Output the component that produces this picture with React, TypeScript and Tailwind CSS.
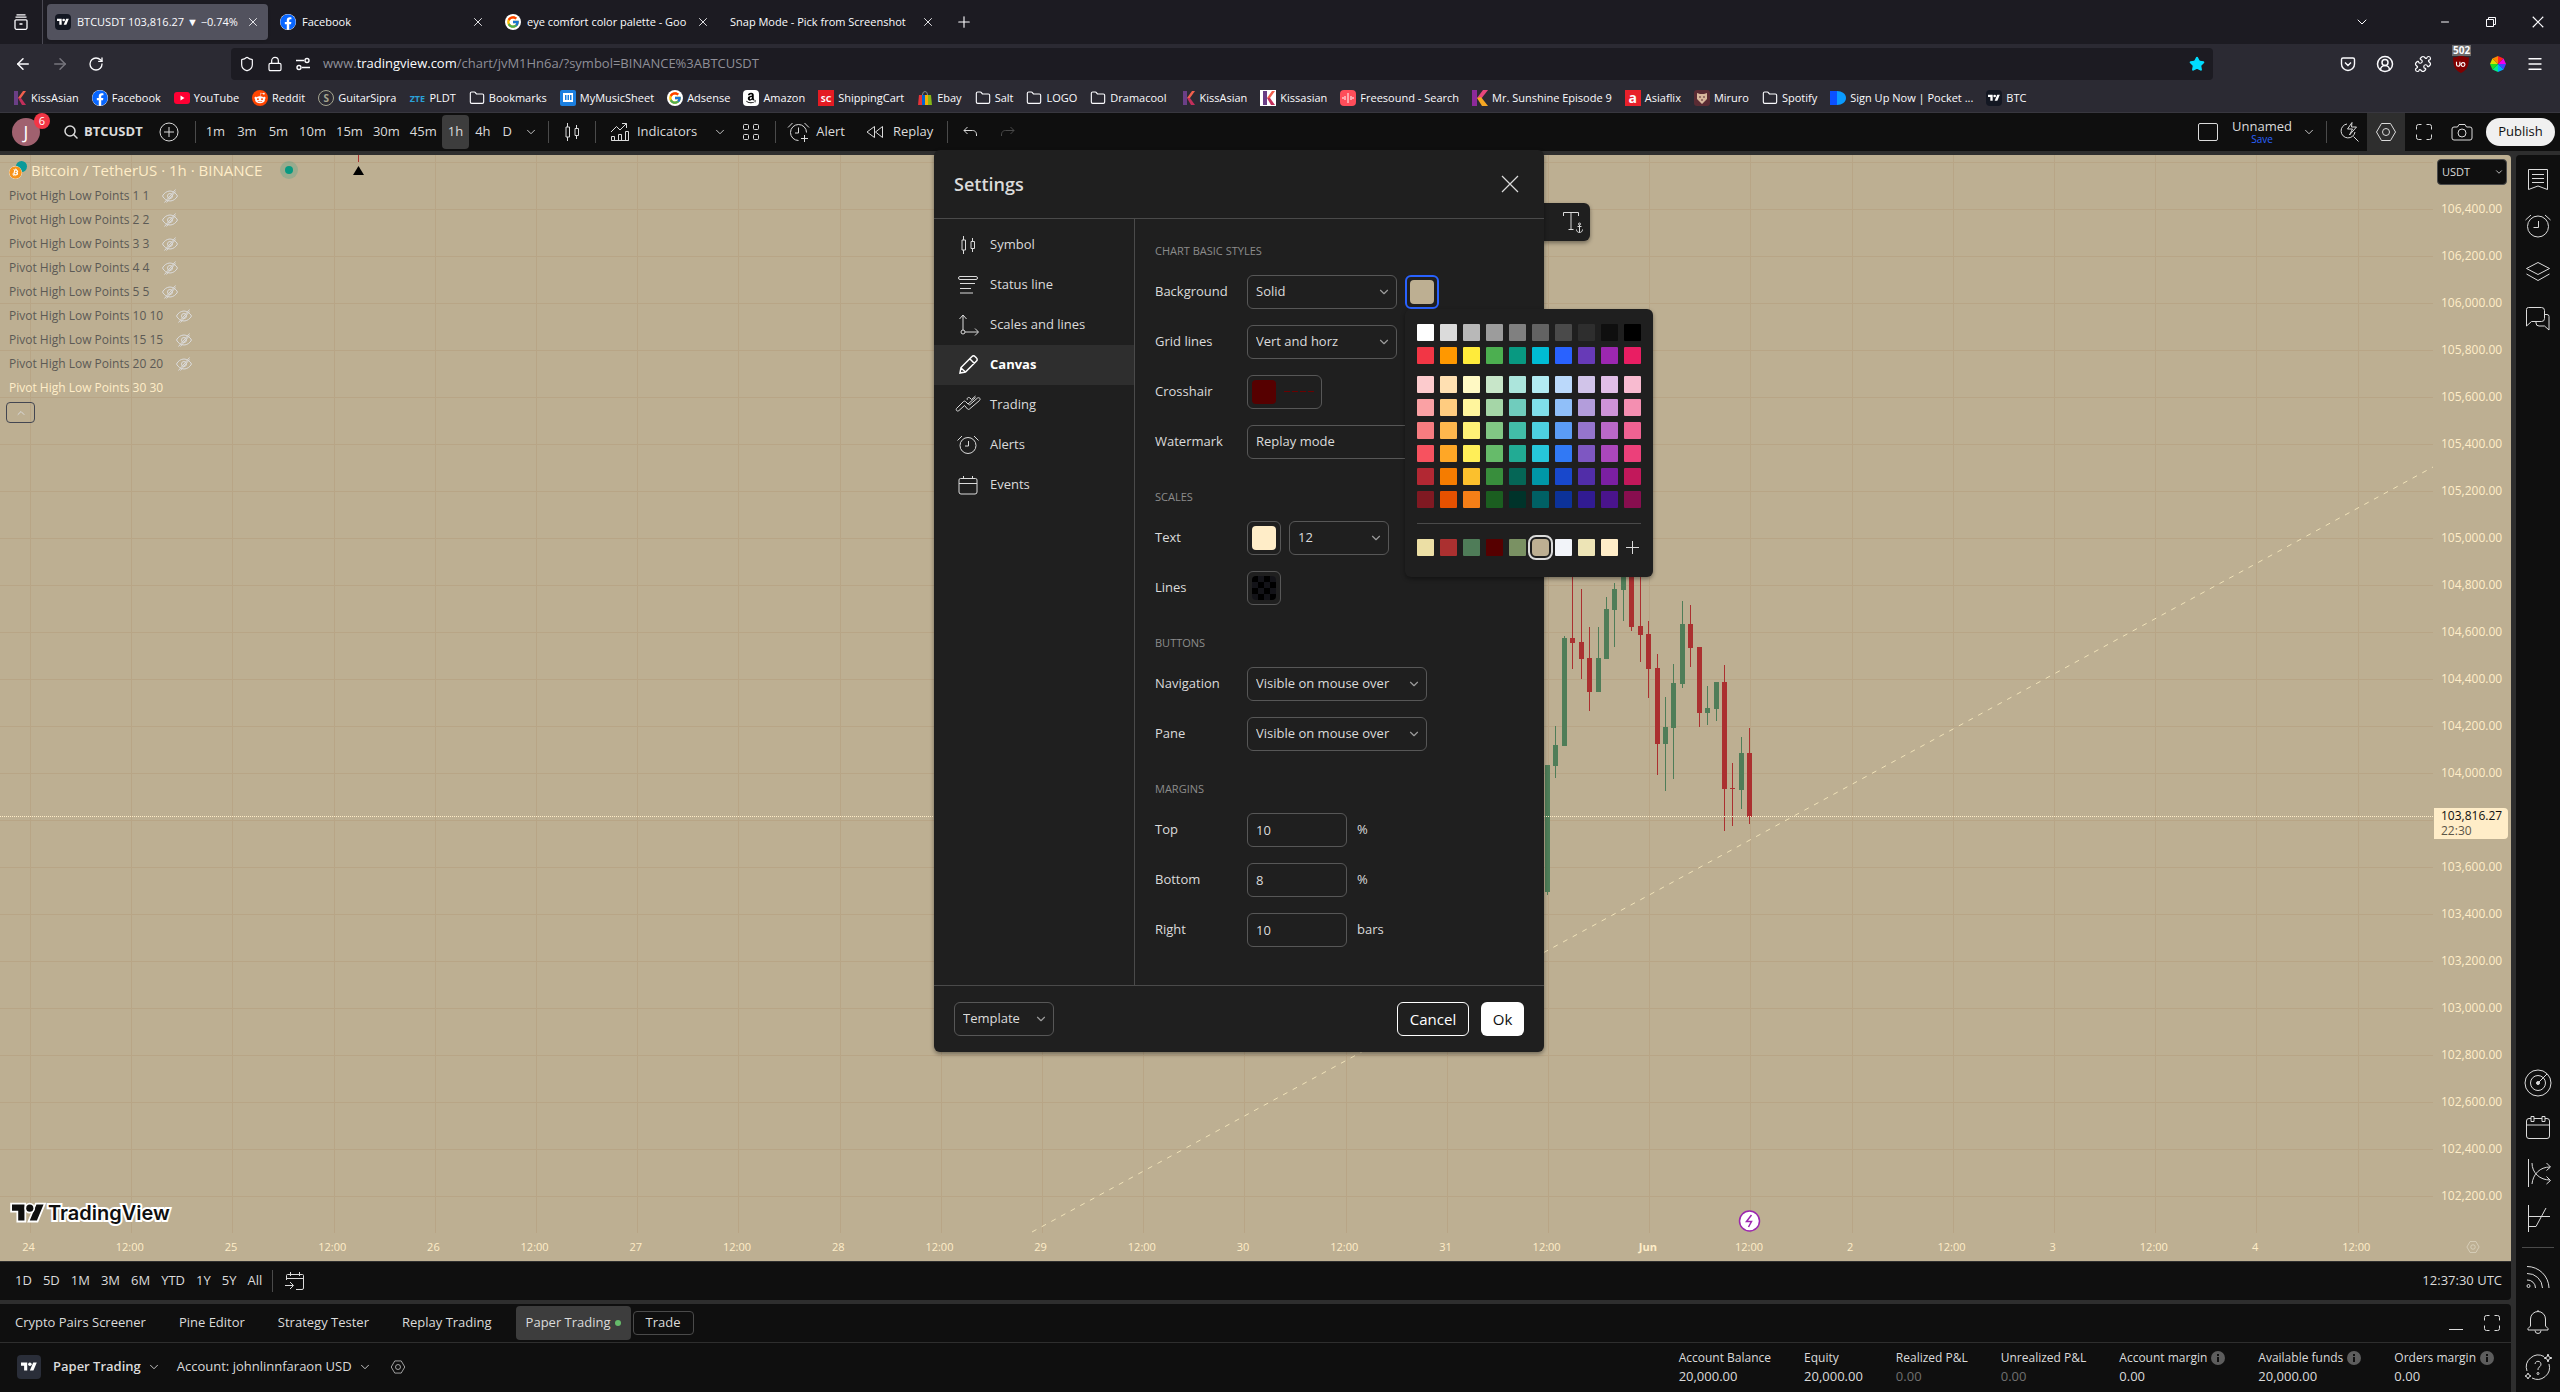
import React, { useState } from 'react';
import { ChevronDown, X, Plus, ArrowLeft, ArrowRight, RotateCw, Shield, Lock, Star, Menu, Minus, Folder, Puzzle, CircleUserRound } from 'lucide-react';
import { FaFacebook, FaRedditAlien, FaAmazon, FaBitcoin } from 'react-icons/fa';
import { FcGoogle } from 'react-icons/fc';

type IconProps = { children: React.ReactNode; className?: string };

// 28x28 line icon, the grid that all the chart icons share
const Icon = ({ children, className = 'w-7 h-7' }: IconProps) => (
  <svg viewBox="0 0 28 28" fill="none" stroke="currentColor" className={`shrink-0 ${className}`}>
    {children}
  </svg>
);

const TvMark = ({ className = '' }: { className?: string }) => (
  <svg viewBox="0 0 36 28" fill="currentColor" className={className}>
    <path d="M14 22H7V11H0V4h14v18zM28 22h-8l7.5-18h8L28 22z" />
    <circle cx="20" cy="8" r="4" />
  </svg>
);

const TvBadge = () => (
  <span className="w-4 h-4 shrink-0 rounded-sm bg-[#131722] text-white flex items-center justify-center">
    <TvMark className="w-3 h-3" />
  </span>
);

const CandlesIcon = () => (
  <Icon>
    <path d="M9.5 5v4M9.5 19v4M18.5 7v3M18.5 18v3M8 9h3.500v10H8zM17 10.500h3.500v7H17z" />
  </Icon>
);

const HexIcon = ({ className }: { className?: string }) => (
  <Icon className={className}>
    <path d="M9.500 5.500h9l5 8.500-5 8.500h-9l-5-8.500z" />
    <circle cx="14" cy="14" r="3.500" />
  </Icon>
);

const AlarmIcon = ({ plus = false }: { plus?: boolean }) => (
  <Icon>
    {plus ? (
      <path d="M14.500 22.500a8 8 0 1 1 8-8M14.500 9.500v5.500H11M4 9.500l4.500-4.500M25 9.500L20.500 5M20.500 17v7M17 20.500h7" />
    ) : (
      <path d="M22 14.500a8 8 0 1 1-16 0 8 8 0 0 1 16 0zM14.500 10v5H11M3.500 9.500L8 5M24.500 9.500L20 5" />
    )}
  </Icon>
);

const CalendarIcon = () => (
  <Icon>
    <path d="M6.500 7.500h15a1.500 1.500 0 0 1 1.500 1.500v12a2 2 0 0 1-2 2H7a2 2 0 0 1-2-2V9a1.500 1.500 0 0 1 1.500-1.500zM5 12.500h18M9.500 5v3M18.500 5v3" />
  </Icon>
);

const CornersIcon = ({ className }: { className?: string }) => (
  <Icon className={className}>
    <path d="M6.500 11.500v-3a2 2 0 0 1 2-2h3M16.500 6.500h3a2 2 0 0 1 2 2v3M21.500 16.500v3a2 2 0 0 1-2 2h-3M11.500 21.500h-3a2 2 0 0 1-2-2v-3" />
  </Icon>
);

const EyeOff = () => (
  <svg viewBox="0 0 18 18" fill="none" stroke="currentColor" className="w-[18px] h-[18px] text-[#dbdbdb]">
    <path d="M1.500 9C3 6 6 4 9 4s6 2 7.500 5c-1.500 3-4.500 5-7.500 5s-6-2-7.500-5zM3.500 15.500l11-13M5.500 15.500l9-11" />
    <circle cx="9" cy="9" r="2.500" />
  </svg>
);

const VLine = () => <div className="w-px h-[22px] bg-[#4a4a4a] shrink-0" />;

/* ---------- browser chrome ---------- */

const tabs = [
  { title: 'BTCUSDT 103,816.27 ▼ −0.74%', icon: <TvBadge />, active: true },
  { title: 'Facebook', icon: <FaFacebook className="w-4 h-4 text-[#0866ff] bg-white rounded-full" /> },
  { title: 'eye comfort color palette - Goo', icon: <span className="w-4 h-4 shrink-0 rounded-full bg-white flex items-center justify-center"><FcGoogle className="w-3.5 h-3.5" /></span> },
  { title: 'Snap Mode - Pick from Screenshot', icon: null },
];

const TabStrip = () => (
  <div className="h-11 flex items-center bg-[#1c1b22]">
    <button aria-label="Recent browsing" className="w-[42px] flex justify-center">
      <svg viewBox="0 0 16 16" fill="none" stroke="currentColor" className="w-4 h-4">
        <path strokeWidth="1.300" d="M3.500.8h9M2.500 3.200h11M3 5.800h10a1 1 0 0 1 1 1v7a1.500 1.500 0 0 1-1.500 1.500h-9A1.500 1.500 0 0 1 2 13.800v-7a1 1 0 0 1 1-1zM6.500 10h3" />
      </svg>
    </button>
    <div className="w-px h-full bg-[#4a4953] mr-1" />
    <div className="flex gap-1">
      {tabs.map((tab) => (
        <div key={tab.title} className={`w-[221px] h-9 rounded px-2 flex items-center gap-1.5 ${tab.active ? 'bg-[#52525e] shadow' : ''}`}>
          {tab.icon}
          <button className="flex-1 text-left whitespace-nowrap">{tab.title}</button>
          <button aria-label="Close tab">
            <X className="w-3.5 h-3.5" strokeWidth={1.5} />
          </button>
        </div>
      ))}
    </div>
    <button aria-label="New tab" className="ml-3">
      <Plus className="w-[18px] h-[18px]" strokeWidth={1.5} />
    </button>
    <div className="ml-auto flex items-center pr-[15px]">
      <button aria-label="List all tabs" className="mr-[69px]"><ChevronDown className="w-4 h-4" strokeWidth={1.5} /></button>
      <button aria-label="Minimize" className="mr-[34px]"><Minus className="w-3 h-3" strokeWidth={2} /></button>
      <button aria-label="Restore" className="mr-[34px]">
        <svg viewBox="0 0 12 12" fill="none" stroke="currentColor" className="w-3 h-3">
          <path d="M1.500 3.500h7v7h-7zM3.500 3.500v-2h7v7h-2" />
        </svg>
      </button>
      <button aria-label="Close window">
        <svg viewBox="0 0 12 12" fill="none" stroke="currentColor" className="w-3.5 h-3.5"><path d="M1.500 1.500l9 9M10.500 1.500l-9 9" /></svg>
      </button>
    </div>
  </div>
);

const UrlBar = () => (
  <div className="h-9 pt-1 flex items-center">
    <div className="w-[231px] flex items-center gap-[19px] pl-3.5">
      <button aria-label="Back"><ArrowLeft className="w-[18px] h-[18px]" strokeWidth={2} /></button>
      <button aria-label="Forward" className="text-[#77767e]"><ArrowRight className="w-[18px] h-[18px]" strokeWidth={2} /></button>
      <button aria-label="Reload"><RotateCw className="w-4 h-4" strokeWidth={2} /></button>
    </div>
    <div className="w-[1982px] shrink h-8 rounded bg-[#1c1b22] flex items-center px-2 gap-3">
      <Shield className="w-4 h-4" strokeWidth={1.8} />
      <Lock className="w-4 h-4" strokeWidth={1.8} />
      <svg viewBox="0 0 16 16" fill="none" stroke="currentColor" className="w-4 h-4" strokeWidth="1.400">
        <path d="M1 4.500h8M7 11.500h8" />
        <circle cx="12" cy="4.500" r="2" />
        <circle cx="4" cy="11.500" r="2" />
      </svg>
      <div className="flex-1 text-[13px] text-[#8f8f98]">
        www.<span className="text-[#fbfbfe]">tradingview.com</span>/chart/jvM1Hn6a/?symbol=BINANCE%3ABTCUSDT
      </div>
      <Star className="w-4 h-4 text-[#00ddff] fill-current" />
    </div>
    <div className="ml-auto flex items-center gap-5 pr-4">
      <button aria-label="Pocket">
        <svg viewBox="0 0 16 16" fill="none" stroke="currentColor" className="w-4 h-4" strokeWidth="1.400">
          <path d="M1.500 3.500a1.500 1.500 0 0 1 1.500-1.500h10a1.500 1.500 0 0 1 1.500 1.500V8a6.500 6.500 0 0 1-13 0zM5 6.500l3 3 3-3" />
        </svg>
      </button>
      <button aria-label="Account"><CircleUserRound className="w-[18px] h-[18px]" strokeWidth={2} /></button>
      <button aria-label="Extensions"><Puzzle className="w-[18px] h-[18px]" strokeWidth={1.6} /></button>
      <button aria-label="Ad blocker" className="relative">
        <svg viewBox="0 0 16 16" className="w-[18px] h-[18px]">
          <path fill="#800000" d="M8 0c2 1.500 4.500 2 7 2 0 7-1 11-7 14C2 13 1 9 1 2c2.500 0 5-.5 7-2z" />
          <path fill="none" stroke="#fff" d="M4 6v2.500a1.500 1.500 0 0 0 3 0V6M11.500 8.500a1.700 1.700 0 1 1-3.400 0 1.700 1.700 0 0 1 3.400 0z" />
        </svg>
        <span className="absolute -top-2.5 left-0 px-px bg-[#6b6b6b] text-[10px] leading-[11px] font-bold">502</span>
      </button>
      <button aria-label="Color picker">
        <svg viewBox="0 0 16 16" className="w-4 h-4">
          <path fill="#f22" d="M8 8V0l5.600 2.400z" /><path fill="#e0e" d="M8 8l5.600-5.600L16 8z" />
          <path fill="#44f" d="M8 8h8l-2.400 5.600z" /><path fill="#0af" d="M8 8l5.600 5.600L8 16z" />
          <path fill="#0e8" d="M8 8v8l-5.600-2.400z" /><path fill="#2d2" d="M8 8l-5.600 5.600L0 8z" />
          <path fill="#dd0" d="M8 8H0l2.400-5.600z" /><path fill="#f80" d="M8 8L2.400 2.400 8 0z" />
        </svg>
      </button>
      <button aria-label="Menu"><Menu className="w-[18px] h-[18px]" strokeWidth={1.8} /></button>
    </div>
  </div>
);

const KMark = ({ className }: { className: string }) => (
  <svg viewBox="0 0 16 16" className={`w-4 h-4 ${className}`}>
    <path fill="#6a3f86" d="M3 1h4v14H3z" />
    <path fill="#f0604d" d="M7 8l5-7h3l-5 7z" />
    <path fill="#c22f5b" d="M7 8h3l5 7h-4z" />
  </svg>
);
const LetterMark = ({ className, children }: IconProps) => (
  <span aria-hidden="true" className={`w-4 h-4 flex items-center justify-center font-bold leading-none ${className}`}>{children}</span>
);
const FolderMark = () => <Folder className="w-4 h-4" strokeWidth={1.7} />;

const bookmarks = [
  { name: 'KissAsian', icon: <KMark className="" /> },
  { name: 'Facebook', icon: <FaFacebook className="w-4 h-4 text-[#0866ff] bg-white rounded-full" /> },
  { name: 'YouTube', icon: <svg viewBox="0 0 16 16" className="w-4 h-4"><rect y="2" width="16" height="12" rx="3" fill="#ff0033" /><path d="M6.500 5.500v5l4-2.500z" fill="#fff" /></svg> },
  { name: 'Reddit', icon: <span className="w-4 h-4 rounded-full bg-[#ff4500] flex items-center justify-center"><FaRedditAlien className="w-3 h-3" /></span> },
  { name: 'GuitarSipra', icon: <LetterMark className="rounded-full border border-[#a5a58f] text-[#a5a58f] text-[10px]">S</LetterMark> },
  { name: 'PLDT', icon: <LetterMark className="text-[9px] text-[#2ba1d8]">ZTE</LetterMark> },
  { name: 'Bookmarks', icon: <FolderMark /> },
  { name: 'MyMusicSheet', icon: <svg viewBox="0 0 16 16" className="w-4 h-4"><rect width="16" height="16" rx="2" fill="#1b7fe0" /><rect x="3" y="3" width="10" height="9" fill="#fff" /><path d="M5 5h1.500v5H5zM7.500 5H9v5H7.500zM10 5h1.500v5H10z" fill="#1b7fe0" /></svg> },
  { name: 'Adsense', icon: <span className="w-4 h-4 rounded-full bg-white flex items-center justify-center"><FcGoogle className="w-3.5 h-3.5" /></span> },
  { name: 'Amazon', icon: <span className="w-4 h-4 rounded-sm bg-white flex items-center justify-center"><FaAmazon className="w-3 h-3 text-black" /></span> },
  { name: 'ShippingCart', icon: <LetterMark className="bg-[#e41b23] text-[9px]">SC</LetterMark> },
  { name: 'Ebay', icon: <svg viewBox="0 0 16 16" className="w-4 h-4"><path fill="#e53238" d="M2 5h3v10H1z" /><path fill="#0064d2" d="M5 5h3v10H5z" /><path fill="#f5af02" d="M8 5h3v10H8z" /><path fill="#86b817" d="M11 5h3l1 10h-4z" /><path fill="none" stroke="#888" d="M5.500 5a2.500 3.500 0 0 1 5 0" /></svg> },
  { name: 'Salt', icon: <FolderMark /> },
  { name: 'LOGO', icon: <FolderMark /> },
  { name: 'Dramacool', icon: <FolderMark /> },
  { name: 'KissAsian', icon: <KMark className="" /> },
  { name: 'Kissasian', icon: <KMark className="bg-white" /> },
  { name: 'Freesound - Search', icon: <svg viewBox="0 0 16 16" className="w-4 h-4"><rect width="16" height="16" rx="4" fill="#ff4d5a" /><path stroke="#fff" d="M3 7v2M5 6v4M8 3v10M11 6v4M13 7v2" /></svg> },
  { name: 'Mr. Sunshine Episode 9', icon: <svg viewBox="0 0 16 16" className="w-4 h-4"><path fill="#8d2a9b" d="M0 0h5v16H0z" /><path fill="#e8467c" d="M5 8l6-8h5l-7 9z" /><path fill="#f5a623" d="M5 8l4-1 7 9h-6z" /></svg> },
  { name: 'Asiaflix', icon: <LetterMark className="bg-[#e8202a] text-sm">a</LetterMark> },
  { name: 'Miruro', icon: <svg viewBox="0 0 16 16" className="w-4 h-4"><rect width="16" height="16" rx="3" fill="#5a2b33" /><path fill="#d8b79c" d="M3 3l3 1h4l3-1v6l-5 5-5-5z" /><path stroke="#5a2b33" d="M5 7h2M9 7h2M7 10h2" /></svg> },
  { name: 'Spotify', icon: <FolderMark /> },
  { name: 'Sign Up Now | Pocket ...', icon: <svg viewBox="0 0 16 16" className="w-4 h-4"><path fill="#0b50ff" d="M0 1h7v14H0z" /><path fill="#0a9bff" d="M7 1c5 0 9 3 9 7s-4 7-9 7z" /></svg> },
  { name: 'BTC', icon: <TvBadge /> },
];

const BookmarksBar = () => (
  <nav className="h-[33px] flex items-center gap-[13px] pl-[11px] pt-1 border-b border-[#38373f]">
    {bookmarks.map((b, i) => (
      <a key={i} href="#" className="flex items-center gap-1 whitespace-nowrap">
        {b.icon}
        {b.name}
      </a>
    ))}
  </nav>
);

/* ---------- chart toolbar ---------- */

const intervals = ['1m', '3m', '5m', '10m', '15m', '30m', '45m', '1h', '4h', 'D'];

const TopToolbar = () => (
  <div className="h-[38px] bg-[#0f0f0f] flex items-center">
    <button aria-label="User menu" className="relative ml-3 w-7 h-7 rounded-full bg-[#a0616f] text-white text-lg leading-none">
      J
      <span className="absolute left-[22px] -top-[5px] w-4 h-4 rounded-full bg-[#f23645] text-[11px] leading-4">6</span>
    </button>
    <button className="ml-[22px] flex items-center gap-1 font-bold">
      <svg viewBox="0 0 18 18" fill="none" stroke="currentColor" className="w-[18px] h-[18px]" strokeWidth="1.500">
        <circle cx="8" cy="8" r="5" /><path d="M11.500 11.500l4 4" />
      </svg>
      BTCUSDT
    </button>
    <button aria-label="Compare" className="mx-3">
      <Icon><circle cx="14" cy="14" r="9" /><path d="M14 9v10M9 14h10" /></Icon>
    </button>
    <VLine />
    <div className="flex ml-1">
      {intervals.map((label) => (
        <button key={label} className={`h-[34px] rounded ${label.length > 2 ? 'px-[5px]' : 'px-1.5'} ${label === '1h' ? 'bg-[#3d3d3d]' : ''}`}>{label}</button>
      ))}
    </div>
    <button aria-label="More intervals" className="px-1.5"><ChevronDown className="w-3.5 h-3.5" strokeWidth={1.5} /></button>
    <div className="w-1" />
    <VLine />
    <button aria-label="Bar style" className="mx-[9px]"><CandlesIcon /></button>
    <VLine />
    <button className="ml-[9px] flex items-center">
      <Icon>
        <path d="M6 14l5.500-5.500 3.500 3.500 6.500-6.500M17 5.500h4.500V10M6.500 22.500v-4h3v4h4v-6h3v6h4v-9h3v9zM6.500 22.500h17" />
      </Icon>
      <span className="ml-1">Indicators</span>
    </button>
    <button aria-label="Favorite indicators" className="ml-4"><ChevronDown className="w-3.5 h-3.5" strokeWidth={1.5} /></button>
    <button aria-label="Indicator templates" className="mx-2.5">
      <Icon><rect x="6.500" y="6.500" width="5" height="5" rx="1" /><rect x="16.500" y="6.500" width="5" height="5" rx="1" /><rect x="6.500" y="16.500" width="5" height="5" rx="1" /><rect x="16.500" y="16.500" width="5" height="5" rx="1" /></Icon>
    </button>
    <VLine />
    <button className="ml-2 flex items-center gap-1"><AlarmIcon plus />Alert</button>
    <button className="ml-4 flex items-center gap-1">
      <Icon><path d="M13.500 8.500v11L6 14zM21.500 8.500v11L14.500 14z" /></Icon>
      Replay
    </button>
    <div className="w-3.5" />
    <VLine />
    <button aria-label="Undo" className="ml-2"><Icon><path d="M11.500 9L8 12.500l3.500 3.500M8 12.500h8.500c2 0 4 1 4 4.500v1" /></Icon></button>
    <button aria-label="Redo" className="ml-2.5 text-[#4a4a4a]"><Icon><path d="M16.500 9l3.500 3.500-3.500 3.500M20 12.500h-8.500c-2 0-4 1-4 4.500v1" /></Icon></button>

    <div className="ml-auto flex items-center pr-[5px]">
      <button aria-label="Layout"><Icon><rect x="4.500" y="5.500" width="19" height="17" rx="1.500" /></Icon></button>
      <button className="ml-2.5 w-[60px] text-center">
        <span className="block leading-[14px]">Unnamed</span>
        <span className="block text-[10px] leading-3 text-[#2962ff]">Save</span>
      </button>
      <button aria-label="Layouts menu" className="mx-2.5"><ChevronDown className="w-3.5 h-3.5" strokeWidth={1.5} /></button>
      <VLine />
      <button aria-label="Quick search" className="ml-2 mr-1">
        <Icon><path d="M12 6a7 7 0 1 0 8 8M18.500 18.500l5 5M17 4.500l-4.500 6.500h5l-3 6 7-8h-5z" /></Icon>
      </button>
      <button aria-label="Settings" className="w-[38px] h-[38px] bg-[#2e2e2e] flex items-center justify-center"><HexIcon /></button>
      <button aria-label="Fullscreen" className="ml-[5px]"><CornersIcon /></button>
      <button aria-label="Snapshot" className="mx-2.5">
        <Icon><path d="M11 6.500h6l1.500 2.500H22a2 2 0 0 1 2 2v9a2 2 0 0 1-2 2H6a2 2 0 0 1-2-2v-9a2 2 0 0 1 2-2h3.500z" /><circle cx="14" cy="15" r="4" /></Icon>
      </button>
      <button className="h-7 w-[69px] rounded-full bg-[#f0f0f0] text-[#0f0f0f] font-medium">Publish</button>
    </div>
  </div>
);

/* ---------- chart ---------- */

// x, high, low, body top, body bottom, rising
const candles: [number, number, number, number, number, boolean][] = [
  [1547, 610, 740, 610, 737, true],
  [1555, 571, 623, 590, 611, true],
  [1564, 481, 591, 483, 591, true],
  [1572, 410, 514, 483, 488, false],
  [1581, 434, 524, 487, 504, false],
  [1589, 472, 556, 503, 537, false],
  [1598, 472, 537, 503, 537, true],
  [1606, 442, 504, 454, 504, true],
  [1614, 428, 492, 434, 455, true],
  [1623, 400, 466, 410, 435, true],
  [1631, 400, 476, 410, 472, false],
  [1640, 410, 507, 471, 480, false],
  [1648, 466, 543, 479, 514, false],
  [1657, 499, 620, 513, 589, false],
  [1665, 542, 636, 572, 589, true],
  [1673, 509, 624, 528, 573, true],
  [1682, 446, 533, 469, 529, true],
  [1690, 450, 512, 469, 493, false],
  [1699, 492, 572, 492, 558, false],
  [1707, 531, 570, 553, 558, true],
  [1716, 527, 566, 527, 554, true],
  [1724, 510, 676, 527, 634, false],
  [1732, 608, 671, 633, 634, false],
  [1741, 582, 654, 598, 635, true],
  [1749, 573, 669, 598, 662, false],
];

const prices = Array.from({ length: 22 }, (_, i) => 106400 - i * 200);
const times = ['24', '12:00', '25', '12:00', '26', '12:00', '27', '12:00', '28', '12:00', '29', '12:00', '30', '12:00', '31', '12:00', 'Jun', '12:00', '2', '12:00', '3', '12:00', '4', '12:00'];
const pivots = [1, 2, 3, 4, 5, 10, 15, 20];

const ChartDrawing = () => (
  <svg className="absolute inset-0 w-full h-full" aria-hidden="true">
    <g stroke="#b8a586" shapeRendering="crispEdges">
      {Array.from({ length: 23 }, (_, i) => (
        <line key={i} x1="0" x2="2433" y1={7.5 + i * 47} y2={7.5 + i * 47} />
      ))}
      {times.map((_, i) => (
        <line key={i} y1="0" y2="1078" x1={Math.round(30 + i * 101.2) + 0.5} x2={Math.round(30 + i * 101.2) + 0.5} />
      ))}
    </g>
    <line x1="1032" y1="1077" x2="2433" y2="312" stroke="#f0e2b8" strokeDasharray="5 6" />
    <path d="M358.500 0v7" stroke="#ab3030" />
    <path d="M358.500 11l5.500 9h-11z" fill="#000" />
    {candles.map(([x, high, low, top, bottom, up]) => (
      <g key={x} fill={up ? '#4f7d58' : '#ab3030'}>
        <rect x={x} y={high} width="1" height={low - high} />
        <rect x={x - 2} y={top} width="5" height={bottom - top} />
      </g>
    ))}
    <line x1="0" x2="2433" y1="661.500" y2="661.500" stroke="#ffedc8" strokeDasharray="1 1" />
    <circle cx="1749.500" cy="1066" r="10" fill="#fff" stroke="#9c27b0" strokeWidth="1.500" />
    <path d="M1751.500 1060l-5 6.500h5l-3 5.500" fill="none" stroke="#9c27b0" strokeWidth="1.500" />
  </svg>
);

const PriceAxis = () => (
  <div className="w-[77px] shrink-0 pt-1 pr-[3px] text-xs leading-4 text-[#ffedc8]">
    <div className="relative h-[26px] ml-[3px]">
      <select aria-label="Currency" className="appearance-none w-[70px] h-[26px] rounded bg-[#0f0f0f] border border-[#4a4a4a] text-[#dbdbdb] text-[11px] px-1">
        <option>USDT</option>
      </select>
      <ChevronDown className="absolute right-1 top-2 w-2.5 h-2.5 text-[#dbdbdb] pointer-events-none" />
    </div>
    {prices.map((p) =>
      p === 103800 ? (
        <div key={p} className="h-[47px] flex items-end pb-1">
          <div className="w-full rounded-r-sm bg-[#ffedc8] text-[#0f0f0f] pl-[7px] leading-[15px] pb-px">
            103,816.27
            <div className="text-[#5c5647]">22:30</div>
          </div>
        </div>
      ) : (
        <div key={p} className="h-[47px] pl-[7px] flex items-center">{p.toLocaleString('en-US')}.00</div>
      ),
    )}
  </div>
);

const Legend = () => (
  <div className="pt-1 pl-[9px] text-xs text-[#5c5a55]">
    <div className="h-[25px] pb-1 flex items-center text-[#ffedc8]">
      <span className="relative w-[18px] h-[18px] mr-1">
        <span className="absolute right-0 top-0 w-[11px] h-[11px] rounded-full bg-[#0b9a9a]" />
        <FaBitcoin className="absolute left-0 bottom-0 w-[13px] h-[13px] text-[#f7931a] bg-white rounded-full" />
      </span>
      <span className="text-[15px]">Bitcoin / TetherUS · 1h · BINANCE</span>
      <span className="ml-[18px] w-[18px] h-[18px] rounded-full bg-[#089981]/20 flex items-center justify-center">
        <span className="w-2 h-2 rounded-full bg-[#089981]" />
      </span>
    </div>
    {pivots.map((n) => (
      <div key={n} className="h-6 flex items-center gap-3">
        Pivot High Low Points {n} {n}
        <button aria-label="Show indicator"><EyeOff /></button>
      </div>
    ))}
    <div className="h-6 flex items-center text-[#ffedc8]">Pivot High Low Points 30 30</div>
    <button aria-label="Collapse legend" className="mt-0.5 -ml-[3px] w-[29px] h-[21px] rounded-sm border border-[#434651] flex items-center justify-center text-[#dbdbdb]">
      <ChevronDown className="w-3 h-3 rotate-180" strokeWidth={2} />
    </button>
  </div>
);

const Chart = () => (
  <section className="relative flex-1 min-h-0 flex flex-col bg-[#bdaf92] rounded-tr overflow-hidden">
    <ChartDrawing />
    <div className="relative flex-1 min-h-0 flex overflow-hidden">
      <div className="flex-1 flex flex-col justify-between">
        <Legend />
        <div className="flex items-center pl-3 pb-1 gap-1 text-[#0f0f0f]">
          <svg viewBox="0 0 36 28" className="w-8 h-[25px] overflow-visible" fill="currentColor" stroke="#fff" strokeWidth="4" paintOrder="stroke">
            <path d="M14 22H7V11H0V4h14v18zM28 22h-8l7.500-18h8L28 22z" />
            <circle cx="20" cy="8" r="4" />
          </svg>
          <span className="font-['Inter',sans-serif] font-semibold text-xl leading-8 [-webkit-text-stroke:4px_white] [paint-order:stroke_fill]">TradingView</span>
        </div>
      </div>
      <PriceAxis />
    </div>
    <div className="relative h-7 flex items-center text-[11px] text-[#ffedc8]">
      <div className="flex-1 flex -ml-[22px] mr-[27px]">
        {times.map((t, i) => (
          <span key={i} className={`flex-1 text-center ${t === 'Jun' ? 'font-bold' : ''}`}>{t}</span>
        ))}
      </div>
      <div className="w-[77px] flex justify-center">
        <button aria-label="Axis settings" className="text-[#e3dccb]"><HexIcon className="w-[18px] h-[18px]" /></button>
      </div>
    </div>
  </section>
);

const ranges = ['1D', '5D', '1M', '3M', '6M', 'YTD', '1Y', '5Y', 'All'];

const RangeBar = () => (
  <div className="h-[39px] bg-[#0f0f0f] rounded-br flex items-center border-t border-[#2e2e2e] pl-[15px] pr-[9px]">
    <div className="flex gap-[11px]">
      {ranges.map((r) => (
        <button key={r}>{r}</button>
      ))}
    </div>
    <div className="w-2.5" />
    <VLine />
    <button aria-label="Go to date" className="ml-2">
      <Icon><path d="M5.500 13V8.500a1 1 0 0 1 1-1h15a1 1 0 0 1 1 1V21a1.500 1.500 0 0 1-1.500 1.500h-6M5.500 11.500h17M9.500 5v4M18.500 5v4M4 18.500h8M9 15l3.500 3.500L9 22" /></Icon>
    </button>
    <button className="ml-auto">12:37:30 UTC</button>
  </div>
);

/* ---------- bottom panel ---------- */

const stats = [
  { label: 'Account Balance', value: '20,000.00' },
  { label: 'Equity', value: '20,000.00' },
  { label: 'Realized P&L', value: '0.00', muted: true },
  { label: 'Unrealized P&L', value: '0.00', muted: true },
  { label: 'Account margin', value: '0.00', info: true },
  { label: 'Available funds', value: '20,000.00', info: true },
  { label: 'Orders margin', value: '0.00', info: true },
];

const BottomPanel = () => (
  <section className="mt-1 h-[88px] bg-[#0f0f0f] rounded-tr">
    <div className="h-[39px] border-b border-[#2e2e2e] flex items-center pl-[15px] pr-[5px]">
      <div className="flex gap-[33px]">
        <button>Crypto Pairs Screener</button>
        <button>Pine Editor</button>
        <button>Strategy Tester</button>
        <button>Replay Trading</button>
      </div>
      <button className="ml-6 h-[34px] px-2.5 rounded bg-[#3d3d3d] flex items-center gap-1">
        Paper Trading
        <span className="w-1.5 h-1.5 rounded-full bg-[#66bb6a]" />
      </button>
      <button className="ml-0.5 h-6 px-3 rounded border border-[#4a4a4a]">Trade</button>
      <div className="ml-auto flex items-center gap-2">
        <button aria-label="Minimize panel"><Icon><path d="M7 20.500h14" /></Icon></button>
        <button aria-label="Maximize panel"><CornersIcon /></button>
      </div>
    </div>
    <div className="h-12 flex items-center pl-[17px] pr-[17px]">
      <span className="w-6 h-6 rounded-sm bg-[#2a2e39] text-white flex items-center justify-center"><TvMark className="w-4 h-4" /></span>
      <button className="ml-3 flex items-center gap-1.5 font-semibold">Paper Trading<ChevronDown className="w-3.5 h-3.5" strokeWidth={1.5} /></button>
      <button className="ml-4 flex items-center gap-1.5">Account: johnlinnfaraon USD<ChevronDown className="w-3.5 h-3.5" strokeWidth={1.5} /></button>
      <button aria-label="Account settings" className="ml-4"><HexIcon className="w-5 h-5" /></button>
      <dl className="ml-auto flex gap-[33px] leading-[18px]">
        {stats.map((s) => (
          <div key={s.label}>
            <dt className="flex items-center gap-1 font-medium text-xs leading-[18px]">
              {s.label}
              {s.info && (
                <svg viewBox="0 0 14 14" className="w-3.5 h-3.5"><circle cx="7" cy="7" r="7" fill="#5d5d5d" /><path d="M7 3v2M7 6v5" stroke="#0f0f0f" strokeWidth="2" /></svg>
              )}
            </dt>
            <dd className={s.muted ? 'text-[#707070]' : ''}>{s.value}</dd>
          </div>
        ))}
      </dl>
    </div>
  </section>
);

/* ---------- right sidebar ---------- */

const SideRail = () => (
  <aside className="w-11 shrink-0 ml-[5px] bg-[#0f0f0f] rounded-tl flex flex-col items-center justify-between pt-[11px] pb-[11px]">
    <div className="flex flex-col gap-[18px]">
      <button aria-label="Watchlist"><Icon><path d="M4.500 3.500h19v20L14 20l-9.500 3.500zM8 8.500h12M8 12.500h12M8 16.500h12" /></Icon></button>
      <button aria-label="Alerts"><Icon><circle cx="14" cy="14.500" r="10.500" /><path d="M14.500 9v6.500H9.500M1.500 8L7 3M26.500 8L21 3" /></Icon></button>
      <button aria-label="Object tree"><Icon><path d="M14 4.500l11.500 6L14 16.500 2.500 10.500zM2.500 16L14 22.500 25.500 16" /></Icon></button>
      <button aria-label="Chat"><Icon><path d="M4.500 3.500h13a3 3 0 0 1 3 3v8a3 3 0 0 1-3 3H7.500L2.500 22V5.500a2 2 0 0 1 2-2zM20.500 10.500H23a2 2 0 0 1 2 2V26l-4.500-4H15a3 3 0 0 1-3-3v-1" /></Icon></button>
    </div>
    <div className="flex flex-col items-center gap-[17px]">
      <button aria-label="Screeners"><Icon><circle cx="14" cy="14" r="13" /><circle cx="14" cy="14" r="7.500" /><circle cx="14" cy="14" r="1.500" fill="currentColor" /><path d="M14 14l9-9" /></Icon></button>
      <button aria-label="Calendars"><Icon><path d="M7 4.500H5a2.500 2.500 0 0 0-2.500 2.500v15A2.500 2.500 0 0 0 5 24.500h18a2.500 2.500 0 0 0 2.500-2.500V7A2.500 2.500 0 0 0 23 4.500h-2M10 4.500h8M2.500 11h23M7 2.500h3v5H7zM18 2.500h3v5h-3z" /></Icon></button>
      <button aria-label="Options"><Icon><path d="M4.500 0v28M8 4c0 10 8 17 18 17M8 25C9 15 16 8 26 8M22.500 4l4 4-4 3.500M22.500 17.500l4 4-4 3.500" /></Icon></button>
      <button aria-label="Yield curves"><Icon><path d="M4.500 1v27M4.500 12.500H26M4.500 22.500H12L22 4" /></Icon></button>
      <div className="w-8 h-px -my-0.5 bg-[#4a4a4a]" />
      <button aria-label="Ideas stream"><Icon><path d="M3 3.500A22 22 0 0 1 25 25M3 10.500A15 15 0 0 1 18.500 25M3 17A8 8 0 0 1 11.500 25" /><circle cx="4.500" cy="23" r="1.500" /></Icon></button>
      <button aria-label="Notifications"><Icon><path d="M4 20.500l2.500-2.500V11a7.500 7.500 0 0 1 15 0v7l2.500 2.500v1.500H4zM11 22.500a3 3 0 0 0 6 0M14 3.500V2" /></Icon></button>
      <button aria-label="Help"><Icon><path d="M25 11a12 12 0 0 1-17 14M3 18A12 12 0 0 1 20 3.500M11 11a3 3 0 1 1 5 2.500c-1.500 1-2 1.500-2 3.500" /><circle cx="14" cy="20.500" r="1" /><path d="M24 1l1 3 3 1-3 1-1 3-1-3-3-1 3-1zM4 20l1 2 2 1-2 1-1 2-1-2-2-1 2-1z" /></Icon></button>
    </div>
  </aside>
);

/* ---------- settings dialog ---------- */

const sections = [
  { name: 'Symbol', icon: <CandlesIcon /> },
  { name: 'Status line', icon: <Icon><path d="M6 5.500h16a1.500 1.500 0 0 1 0 3H6a1.500 1.500 0 0 1 0-3zM6 12.500h15M6 17.500h11M6 22h13" /></Icon> },
  { name: 'Scales and lines', icon: <Icon><path d="M9 19V4M5.500 8L9 4l3.500 4M11 21h13M21 17.500l3.500 3.500-3.500 3.500" /><circle cx="9" cy="21" r="2" /></Icon> },
  { name: 'Canvas', icon: <Icon><path strokeWidth="1.500" d="M6 22l1-5.500L18 5.500a2 2 0 0 1 3 0L22.500 7a2 2 0 0 1 0 3l-11 11zM16 8l4.500 4.500M7 17l4.500 4" /></Icon> },
  { name: 'Trading', icon: <Icon><path d="M2.500 17.500l7-7a1.500 1.500 0 0 1 2 0l2.500 2.500 7.500-6.500M2.500 17.500c-1 1.500.5 3.500 2.500 2l5.500-5 3 3.500a1.500 1.500 0 0 0 2 0l10-8.500c1.500-1.500 0-3.500-2-2.500l-8 7-2-2M13.500 9c-1-1.500.5-3.500 2.500-2l1.500 1.500 4-3.500" /></Icon> },
  { name: 'Alerts', icon: <AlarmIcon /> },
  { name: 'Events', icon: <CalendarIcon /> },
];

const Select = ({ id, value, className }: { id: string; value: string; className: string }) => (
  <div className={`relative ${className}`}>
    <select id={id} className="appearance-none w-full h-[34px] rounded-md border border-[#575757] bg-[#1f1f1f] pl-2 pr-6">
      <option>{value}</option>
    </select>
    <ChevronDown className="absolute right-1.5 top-[10px] w-3.5 h-3.5 text-[#9c9c9c] pointer-events-none" strokeWidth={2} />
  </div>
);

const Row = ({ label, id, children }: { label: string; id: string; children: React.ReactNode }) => (
  <div className="flex items-center h-[34px]">
    <label htmlFor={id} className="w-[92px] shrink-0">{label}</label>
    {children}
  </div>
);

const Group = ({ title, children }: { title: string; children: React.ReactNode }) => (
  <section className="flex flex-col gap-4">
    <h3 className="text-[11px] leading-4 text-[#8c8c8c]">{title}</h3>
    {children}
  </section>
);

const Margin = ({ label, initial, unit }: { label: string; initial: string; unit: string }) => {
  const [value, setValue] = useState(initial);
  return (
    <Row label={label} id={label}>
      <input id={label} value={value} onChange={(e) => setValue(e.target.value)} className="w-[100px] h-[34px] rounded-md border border-[#575757] bg-transparent px-2" />
      <span className="ml-2.5">{unit}</span>
    </Row>
  );
};

const SettingsDialog = () => {
  const [current, setCurrent] = useState('Canvas');

  return (
    <div role="dialog" aria-label="Settings" className="absolute left-[934px] top-[37px] w-[610px] rounded-md bg-[#1f1f1f] shadow-[0_2px_4px_rgba(0,0,0,0.4)]">
      <div className="h-[69px] px-5 border-b border-[#4a4a4a] flex items-center justify-between">
        <h2 className="text-lg font-semibold">Settings</h2>
        <button aria-label="Close">
          <Icon><path strokeWidth="1.200" d="M6 6l16 16M22 6L6 22" /></Icon>
        </button>
      </div>
      <div className="flex">
        <div className="w-[201px] border-r border-[#4a4a4a] pt-1.5">
          {sections.map((s) => (
            <button
              key={s.name}
              onClick={() => setCurrent(s.name)}
              className={`w-full h-10 pl-5 flex items-center gap-2 ${s.name === current ? 'bg-[#2e2e2e] text-white font-bold' : ''}`}
            >
              {s.icon}
              {s.name}
            </button>
          ))}
        </div>
        <div className="flex-1 pl-5 pt-6 pb-[38px] flex flex-col gap-[30px]">
          <Group title="CHART BASIC STYLES">
            <Row label="Background" id="background">
              <Select id="background" value="Solid" className="w-[150px]" />
              <button aria-label="Background color" className="ml-2 w-[34px] h-[34px] rounded-md border-2 border-[#2962ff] p-[3px]">
                <span className="block w-full h-full rounded-sm bg-[#bdaf92]" />
              </button>
            </Row>
            <Row label="Grid lines" id="grid">
              <Select id="grid" value="Vert and horz" className="w-[150px]" />
            </Row>
            <Row label="Crosshair" id="crosshair">
              <button id="crosshair" aria-label="Crosshair style" className="w-[75px] h-[34px] rounded-md border border-[#575757] px-1 flex items-center gap-2">
                <span className="w-6 h-6 rounded-sm bg-[#560000]" />
                <svg viewBox="0 0 30 2" className="w-[30px] h-0.5"><path d="M0 .5h30" stroke="#6a0000" strokeDasharray="6 2" /></svg>
              </button>
            </Row>
            <Row label="Watermark" id="watermark">
              <Select id="watermark" value="Replay mode" className="w-[180px]" />
            </Row>
          </Group>
          <Group title="SCALES">
            <Row label="Text" id="textsize">
              <button aria-label="Text color" className="mr-2 w-[34px] h-[34px] rounded-md border border-[#575757] p-1">
                <span className="block w-full h-full rounded-sm bg-[#ffedc8]" />
              </button>
              <Select id="textsize" value="12" className="w-[100px]" />
            </Row>
            <Row label="Lines" id="lines">
              <button id="lines" aria-label="Lines color" className="w-[34px] h-[34px] rounded-md border border-[#575757] p-1">
                <span className="block w-full h-full rounded-sm bg-[repeating-conic-gradient(#131318_0%_25%,#000_0%_50%)] bg-[length:12px_12px]" />
              </button>
            </Row>
          </Group>
          <Group title="BUTTONS">
            <Row label="Navigation" id="navigation">
              <Select id="navigation" value="Visible on mouse over" className="w-[180px]" />
            </Row>
            <Row label="Pane" id="pane">
              <Select id="pane" value="Visible on mouse over" className="w-[180px]" />
            </Row>
          </Group>
          <Group title="MARGINS">
            <Margin label="Top" initial="10" unit="%" />
            <Margin label="Bottom" initial="8" unit="%" />
            <Margin label="Right" initial="10" unit="bars" />
          </Group>
        </div>
      </div>
      <div className="h-[67px] px-5 border-t border-[#4a4a4a] flex items-center">
        <Select id="template" value="Template" className="w-[100px]" />
        <label htmlFor="template" className="sr-only">Template</label>
        <button className="ml-auto h-[34px] w-[72px] rounded-md border border-white text-white text-[15px]">Cancel</button>
        <button className="ml-3 h-[34px] w-[43px] rounded-md bg-white text-[#0f0f0f] text-[15px]">Ok</button>
      </div>
    </div>
  );
};

const baseColors = [
  'bg-[#ffffff]', 'bg-[#dbdbdb]', 'bg-[#b8b8b8]', 'bg-[#9c9c9c]', 'bg-[#808080]', 'bg-[#636363]', 'bg-[#4a4a4a]', 'bg-[#2e2e2e]', 'bg-[#0f0f0f]', 'bg-[#000000]',
  'bg-[#f23645]', 'bg-[#ff9800]', 'bg-[#ffeb3b]', 'bg-[#4caf50]', 'bg-[#089981]', 'bg-[#00bcd4]', 'bg-[#2962ff]', 'bg-[#673ab7]', 'bg-[#9c27b0]', 'bg-[#e91e63]',
];
const shadeColors = [
  'bg-[#fccbcd]', 'bg-[#ffe0b2]', 'bg-[#fff9c4]', 'bg-[#c8e6c9]', 'bg-[#ace5dc]', 'bg-[#b2ebf2]', 'bg-[#bbd9fb]', 'bg-[#d1c4e9]', 'bg-[#e1bee7]', 'bg-[#f8bbd0]',
  'bg-[#faa1a4]', 'bg-[#ffcc80]', 'bg-[#fff59d]', 'bg-[#a5d6a7]', 'bg-[#70ccbd]', 'bg-[#80deea]', 'bg-[#90bff9]', 'bg-[#b39ddb]', 'bg-[#ce93d8]', 'bg-[#f48fb1]',
  'bg-[#f77c80]', 'bg-[#ffb74d]', 'bg-[#fff176]', 'bg-[#81c784]', 'bg-[#42bda8]', 'bg-[#4dd0e1]', 'bg-[#5b9cf6]', 'bg-[#9575cd]', 'bg-[#ba68c8]', 'bg-[#f06292]',
  'bg-[#f7525f]', 'bg-[#ffa726]', 'bg-[#ffee58]', 'bg-[#66bb6a]', 'bg-[#22ab94]', 'bg-[#26c6da]', 'bg-[#3179f5]', 'bg-[#7e57c2]', 'bg-[#ab47bc]', 'bg-[#ec407a]',
  'bg-[#b22833]', 'bg-[#f57c00]', 'bg-[#fbc02d]', 'bg-[#388e3c]', 'bg-[#056656]', 'bg-[#0097a7]', 'bg-[#1848cc]', 'bg-[#512da8]', 'bg-[#7b1fa2]', 'bg-[#c2185b]',
  'bg-[#801922]', 'bg-[#e65100]', 'bg-[#f57f17]', 'bg-[#1b5e20]', 'bg-[#00332a]', 'bg-[#006064]', 'bg-[#0c3299]', 'bg-[#311b92]', 'bg-[#4a148c]', 'bg-[#880e4f]',
];
const customColors = ['bg-[#ecdfa5]', 'bg-[#ab3030]', 'bg-[#4f7c58]', 'bg-[#560000]', 'bg-[#7a9163]', 'bg-[#bdaf92]', 'bg-[#f2f4f9]', 'bg-[#ede4b6]', 'bg-[#ffedc8]'];

const SwatchGrid = ({ colors, children }: { colors: string[]; children?: React.ReactNode }) => (
  <div className="grid grid-cols-10 gap-1.5">
    {colors.map((c) => (
      <button
        key={c}
        aria-label="Color"
        className={`h-[17px] rounded-[1px] ${c} ${c === 'bg-[#bdaf92]' ? 'outline-2 outline-offset-2 outline-[#dbdbdb] rounded-sm' : ''}`}
      />
    ))}
    {children}
  </div>
);

const ColorPicker = () => (
  <div className="absolute left-[1405px] top-[196px] w-[248px] px-3 pt-[15px] pb-[21px] rounded-md bg-[#1f1f1f] shadow-[0_2px_4px_rgba(0,0,0,0.4)]">
    <SwatchGrid colors={baseColors} />
    <div className="mt-3">
      <SwatchGrid colors={shadeColors} />
    </div>
    <div className="my-[15px] h-px bg-[#4a4a4a]" />
    <SwatchGrid colors={customColors}>
      <button aria-label="Add custom color" className="flex items-center justify-center">
        <svg viewBox="0 0 17 17" stroke="currentColor" className="w-[17px] h-[17px]"><path d="M8.500 2v13M2 8.500h13" /></svg>
      </button>
    </SwatchGrid>
  </div>
);

const App = () => (
  <div className="h-screen flex flex-col overflow-hidden bg-[#2b2a33] text-[#fbfbfe] text-[11px] font-['Open_Sans',sans-serif]">
    <TabStrip />
    <UrlBar />
    <BookmarksBar />

    <main className="relative flex-1 min-h-0 flex flex-col bg-[#2e2e2e] text-[#dbdbdb] text-[13px]">
      <TopToolbar />
      <div className="flex-1 min-h-0 flex pt-1">
        <div className="flex-1 min-w-0 flex flex-col">
          <Chart />
          <RangeBar />
          <BottomPanel />
        </div>
        <SideRail />
      </div>

      {/* Floating drawing toolbar, its left part is under the dialog */}
      <div className="absolute left-[1500px] top-[90px] w-[90px] h-[38px] rounded-md bg-[#1f1f1f] shadow-[0_2px_4px_rgba(0,0,0,0.4)] flex items-center justify-end pr-1">
        <button aria-label="Anchored text">
          <Icon><path d="M5.500 8V4.500h15V8M13 4.500v17M10.500 21.500h5M21.500 17v7.500M19.500 18.500h4M18.500 21.500c0 2 1.500 3 3 3s3-1 3-3" /><circle cx="21.500" cy="16" r="1" /></Icon>
        </button>
      </div>
      <SettingsDialog />
      <ColorPicker />
    </main>
  </div>
);

export default App;
